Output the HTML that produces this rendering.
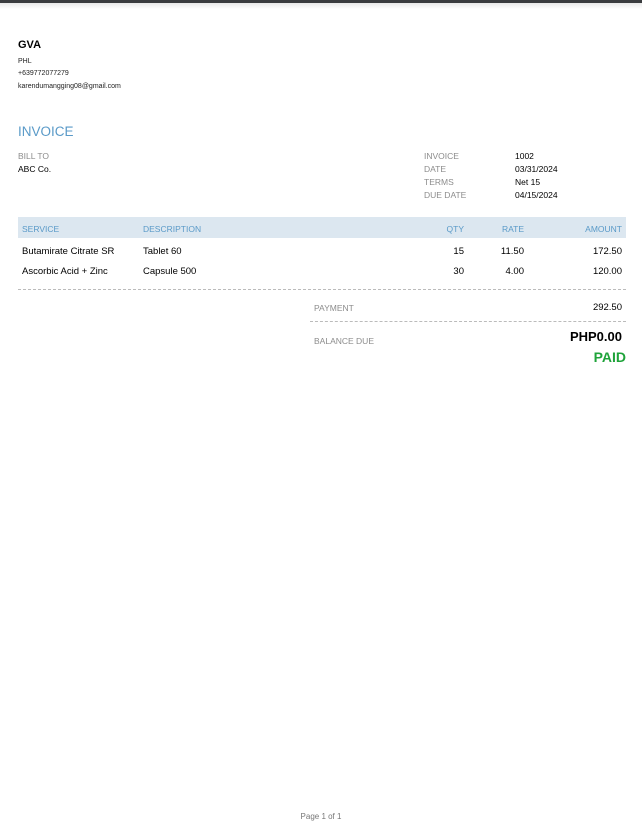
<!DOCTYPE html>
<html><head><style>
body{margin:0;width:642px;height:833px;background:#fff;font-family:"Liberation Sans",Arial,sans-serif;position:relative;overflow:hidden}
div{position:absolute;white-space:nowrap}
.g{color:#8c8c8c}
.b{color:#5a9ac8}
.s8{font-size:8.5px}
.s9{font-size:9.5px}
.s7{font-size:7px;color:#222}
.r{text-align:right}
</style></head><body>
<div style="left:0;top:0;width:642px;height:3px;background:#3a3c3f"></div>
<div style="left:0;top:3px;width:642px;height:6px;background:linear-gradient(#e8e8e8,#fff)"></div>
<div style="left:18px;top:39px;font-size:11px;font-weight:bold">GVA</div>
<div class="s7" style="left:18px;top:58px">PHL</div>
<div class="s7" style="left:18px;top:70px">+639772077279</div>
<div class="s7" style="left:18px;top:83px">karendumangging08@gmail.com</div>
<div class="b" style="left:18px;top:124px;font-size:13.5px">INVOICE</div>
<div class="g s8" style="left:18px;top:151px">BILL TO</div>
<div class="s8" style="left:18px;top:164px">ABC Co.</div>
<div class="g s8" style="left:424px;top:151px">INVOICE</div>
<div class="g s8" style="left:424px;top:164px">DATE</div>
<div class="g s8" style="left:424px;top:177px">TERMS</div>
<div class="g s8" style="left:424px;top:190px">DUE DATE</div>
<div class="s8" style="left:515px;top:151px">1002</div>
<div class="s8" style="left:515px;top:164px">03/31/2024</div>
<div class="s8" style="left:515px;top:177px">Net 15</div>
<div class="s8" style="left:515px;top:190px">04/15/2024</div>
<div style="left:18px;top:217px;width:608px;height:21px;background:#dce7f0"></div>
<div class="b s8" style="left:22px;top:224px">SERVICE</div>
<div class="b s8" style="left:143px;top:224px">DESCRIPTION</div>
<div class="b s8 r" style="left:400px;width:64px;top:224px">QTY</div>
<div class="b s8 r" style="left:460px;width:64px;top:224px">RATE</div>
<div class="b s8 r" style="left:540px;width:82px;top:224px">AMOUNT</div>
<div class="s9" style="left:22px;top:246px">Butamirate Citrate SR</div>
<div class="s9" style="left:143px;top:246px">Tablet 60</div>
<div class="s9 r" style="left:400px;width:64px;top:246px">15</div>
<div class="s9 r" style="left:460px;width:64px;top:246px">11.50</div>
<div class="s9 r" style="left:540px;width:82px;top:246px">172.50</div>
<div class="s9" style="left:22px;top:266px">Ascorbic Acid + Zinc</div>
<div class="s9" style="left:143px;top:266px">Capsule 500</div>
<div class="s9 r" style="left:400px;width:64px;top:266px">30</div>
<div class="s9 r" style="left:460px;width:64px;top:266px">4.00</div>
<div class="s9 r" style="left:540px;width:82px;top:266px">120.00</div>
<div style="left:18px;top:289px;width:608px;border-top:1px dashed #bbb"></div>
<div class="g s8" style="left:314px;top:303px">PAYMENT</div>
<div class="s9 r" style="left:540px;width:82px;top:302px">292.50</div>
<div style="left:310px;top:321px;width:316px;border-top:1px dashed #bbb"></div>
<div class="g s8" style="left:314px;top:336px">BALANCE DUE</div>
<div class="r" style="left:500px;width:122px;top:329px;font-size:13px;font-weight:bold">PHP0.00</div>
<div class="r" style="left:500px;width:126px;top:349px;font-size:14px;font-weight:bold;color:#1fa33a">PAID</div>
<div style="left:0;width:642px;top:812px;text-align:center;font-size:8px;color:#777">Page 1 of 1</div>
</body></html>
